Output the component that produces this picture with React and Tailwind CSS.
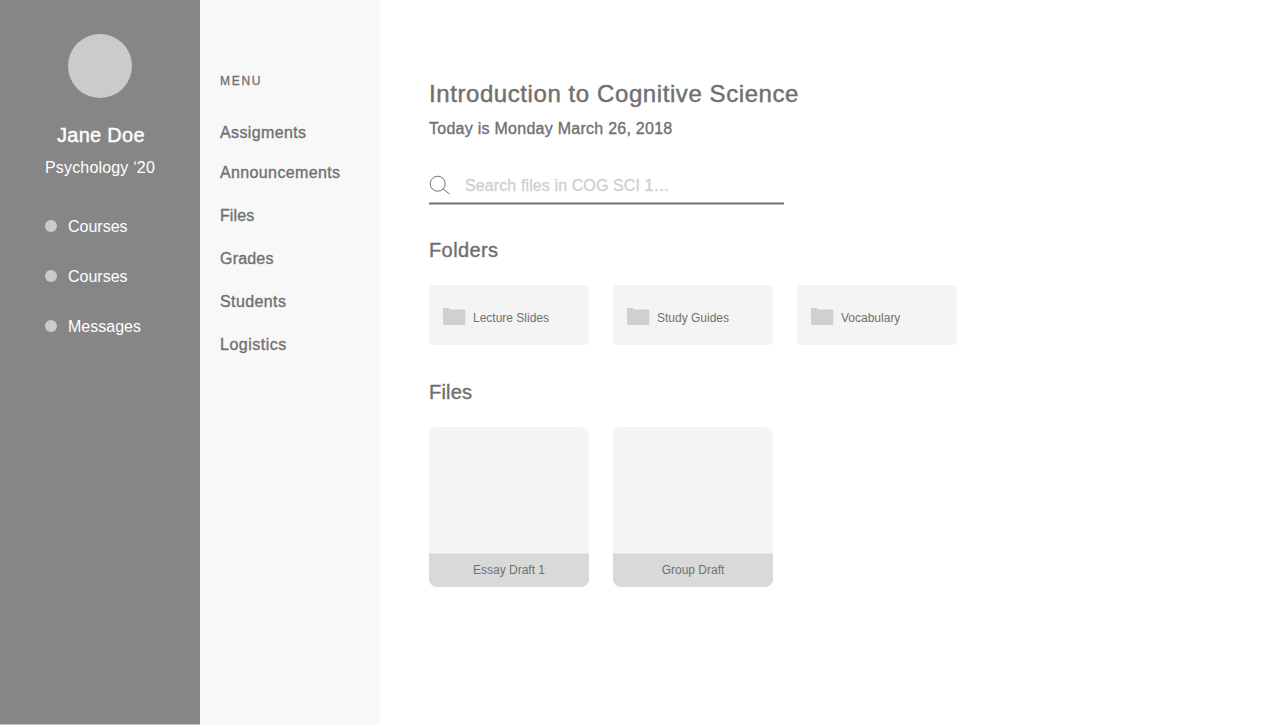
const links = ["Courses", "Courses", "Messages"];
const menu = [
  { label: "Assigments", style: "mb-4 tracking-[0.38px]" },
  { label: "Announcements", style: "mb-[19px] tracking-[0.37px]" },
  { label: "Files", style: "mb-[19px] tracking-[0.1px]" },
  { label: "Grades", style: "mb-[19px] tracking-[0.2px]" },
  { label: "Students", style: "mb-[19px] tracking-[0.4px]" },
  { label: "Logistics", style: "tracking-[0.5px]" },
];
const folders = ["Lecture Slides", "Study Guides", "Vocabulary"];
const files = ["Essay Draft 1", "Group Draft"];

function FolderIcon() {
  return (
    <svg className="-mt-0.5 ml-3.5 h-[18px] w-[23px] shrink-0" viewBox="0 0 23 18" fill="#d0d0d0">
      <path d="M.5 0h5.300c.7 0 .7 1.400 1.600 1.400h13.500c1 0 1.400.5 1.400 1.400v12.800c0 1-.5 1.500-1.400 1.500H1.400C.5 17.100 0 16.600 0 15.600V.5C0 .2.200 0 .5 0Z" />
    </svg>
  );
}

export default function App() {
  return (
    <div className="flex h-[728px] w-full overflow-hidden bg-white font-['Liberation_Sans',Arial,sans-serif] whitespace-nowrap text-[#707070]">
      <aside className="h-[725px] w-[200px] shrink-0 border-b border-[#c8c4c4] bg-[#868686] pt-[34px] text-white">
        <div className="mx-auto size-16 rounded-full bg-[#cbcbcb]" />
        <h2 className="mt-[25px] ml-[57px] text-xl leading-6 font-normal tracking-[0.27px] [-webkit-text-stroke:0.4px]">Jane Doe</h2>
        <p className="mt-[9px] ml-[45px] text-base leading-6 tracking-[0.17px]">Psychology ‘20</p>
        <nav className="mt-[34px] flex flex-col gap-[26px] pl-[45px]">
          {links.map((label, i) => (
            <a key={i} className="flex h-6 items-center gap-[11px] text-base leading-6">
              <span className="size-3 rounded-full bg-[#cbcbcb]" />
              <span className="pt-0.5">{label}</span>
            </a>
          ))}
        </nav>
      </aside>

      <aside className="h-[725px] w-[180px] shrink-0 bg-[#f8f8f8] pt-[73px] pl-5">
        <h3 className="text-xs leading-4 tracking-[1.7px] [-webkit-text-stroke:0.3px]">MENU</h3>
        <nav className="mt-8 flex flex-col text-base leading-6 [-webkit-text-stroke:0.35px]">
          {menu.map(({ label, style }) => (
            <a key={label} className={style}>{label}</a>
          ))}
        </nav>
      </aside>

      <main className="pt-[78px] pl-[49px]">
        <h1 className="text-2xl leading-8 font-normal tracking-[0.58px] [-webkit-text-stroke:0.45px]">Introduction to Cognitive Science</h1>
        <p className="mt-[7px] text-base leading-6 tracking-[0.26px] [-webkit-text-stroke:0.35px]">Today is Monday March 26, 2018</p>
        <div className="mt-[33px] flex h-7 w-[355px] items-start">
          <svg className="mt-px h-5 w-[22px] shrink-0" viewBox="0 0 22 20" fill="none" stroke="#606060" strokeWidth="0.9">
            <circle cx="8.700" cy="8.700" r="7.500" />
            <path d="m14.200 14 6.300 5" />
          </svg>
          <span className="ml-3.5 text-base leading-6 tracking-[0.11px] text-[#d0d0d0] [-webkit-text-stroke:0.35px]">Search files in COG SCI 1…</span>
        </div>
        <div className="h-[3px] w-[355px] border-y border-[#b8b8b8] bg-[#707070]" />
        <h2 className="mt-[31px] text-xl leading-7 tracking-[0.4px] [-webkit-text-stroke:0.4px]">Folders</h2>
        <div className="mt-[21px] flex gap-6">
          {folders.map((label) => (
            <div key={label} className="flex h-[60px] w-40 items-center rounded bg-[#f4f4f4] pt-1.5 text-xs leading-4">
              <FolderIcon />
              <span className="ml-[7px]">{label}</span>
            </div>
          ))}
        </div>
        <h2 className="mt-[33px] text-xl leading-7 tracking-[0.2px] [-webkit-text-stroke:0.4px]">Files</h2>
        <div className="mt-[21px] flex gap-6">
          {files.map((label) => (
            <div key={label} className="flex h-40 w-40 flex-col justify-end overflow-hidden rounded-lg bg-[#f4f4f4]">
              <div className="h-[34px] border-t border-[#e5e5e5] bg-[#d9d9d9] pt-2 text-center text-xs leading-4">{label}</div>
            </div>
          ))}
        </div>
      </main>
    </div>
  );
}
